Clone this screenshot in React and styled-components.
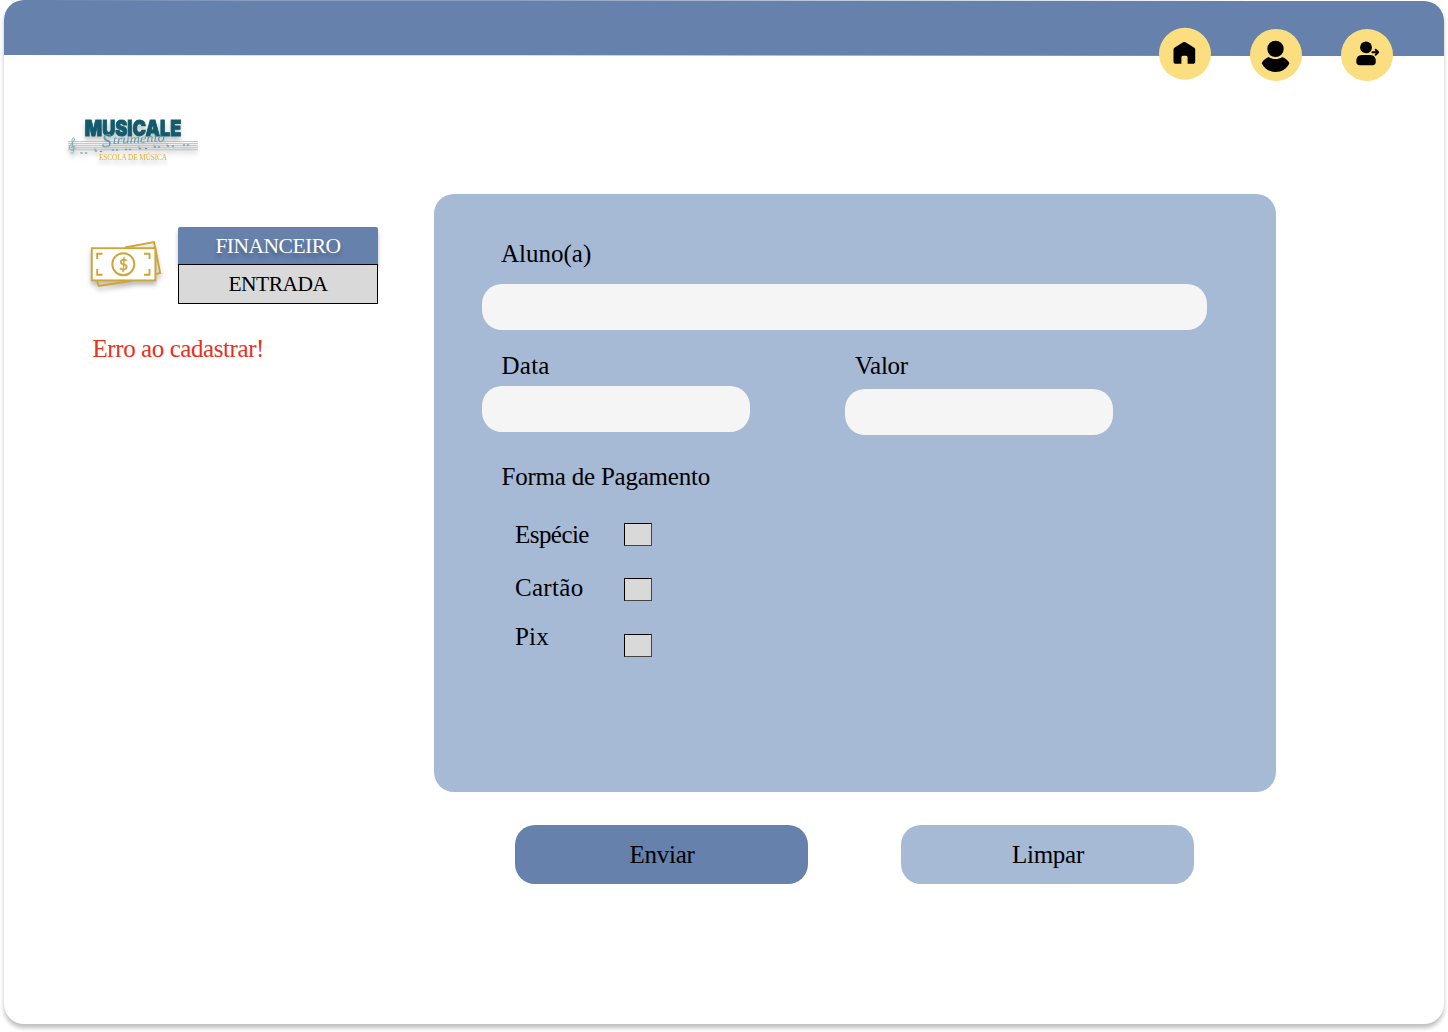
import React from "react";
import styled, { createGlobalStyle } from "styled-components";

const serif = '"Liberation Serif", "Times New Roman", serif';

const GlobalStyle = createGlobalStyle`
  * { box-sizing: border-box; }
  body { margin: 0; background: #fff; font-family: ${serif}; color: #000; }
`;

const Page = styled.div`
  width: 1448px;
  height: 1032px;
  padding: 0 4px 8px;
  overflow: hidden;
`;

const Card = styled.div`
  height: 1024px;
  background: #fff;
  border-radius: 20px;
  box-shadow: 0 4px 4px rgba(0, 0, 0, 0.25);
`;

const Header = styled.header`
  height: 55px;
  background: #6581ac;
  border-radius: 20px 20px 0 0;
  transform: skewY(0.04deg);
  transform-origin: left top;
`;

const Nav = styled.nav`
  display: flex;
  justify-content: flex-end;
  gap: 39px;
  padding: 27px 51px 0 0;
`;

const NavItem = styled.div`
  padding-top: ${(p) => p.$drop || 0}px;
`;

const NavButton = styled.button`
  display: flex;
  align-items: center;
  justify-content: center;
  width: 52px;
  height: 52px;
  padding: 0;
  border: 0;
  border-radius: 50%;
  background: #fbde80;
`;

const Brand = styled.svg`
  display: block;
  margin: 55px 0 20px 56px;
  overflow: visible;
`;

const BrandArt = styled.g`
  filter: drop-shadow(0 4px 2px rgba(0, 0, 0, 0.25));
`;

const Body = styled.div`
  display: flex;
`;

const Sidebar = styled.aside`
  width: 430px;
  padding: 26px 0 0 76px;
`;

const SectionHead = styled.div`
  display: flex;
  height: 114px;
  gap: 14px;
`;

const Bills = styled.svg`
  flex: none;
  width: 84px;
  height: 80px;
  overflow: visible;
  filter: drop-shadow(0 4px 2px rgba(0, 0, 0, 0.25));
`;

const Menu = styled.div`
  width: 200px;
  padding-top: 7px;
`;

const MenuTitle = styled.div`
  height: 37px;
  line-height: 39px;
  text-align: center;
  font-size: 21.5px;
  letter-spacing: -0.5px;
  color: #fff;
  background: #6581ac;
  border-radius: 2px 2px 0 0;
  box-shadow: 0 4px 4px rgba(0, 0, 0, 0.25);
  text-shadow: 0 4px 4px rgba(0, 0, 0, 0.25);
`;

const MenuItem = styled.div`
  position: relative;
  height: 40px;
  line-height: 38px;
  text-align: center;
  font-size: 21.5px;
  letter-spacing: -0.5px;
  background: #d9d9d9;
  border: 1px solid #000;
`;

const Text = styled.span`
  display: block;
  font-size: 25px;
  line-height: 30px;
  white-space: nowrap;
  letter-spacing: ${(p) => p.$spacing || 0}px;
  color: ${(p) => p.$color || "#000"};
`;

const ErrorText = styled(Text)`
  margin-left: 12.5px;
`;

const Form = styled.form`
  width: 842px;
`;

const Panel = styled.section`
  height: 598px;
  padding: 45px 48px 0;
  border-radius: 20px;
  background: #a6b9d5;
`;

const Field = styled.label`
  display: block;
  width: ${(p) => p.$width}px;
`;

const FieldName = styled(Text)`
  padding-left: ${(p) => p.$inset}px;
  margin-bottom: ${(p) => p.$gap}px;
`;

const Input = styled.input`
  display: block;
  width: 100%;
  height: 46px;
  padding: 0 20px;
  border: 0;
  border-radius: 20px;
  background: #f5f5f5;
  font: 22px ${serif};
`;

const FieldRow = styled.div`
  display: flex;
  gap: 95px;
  height: 132px;
  padding-top: 21px;
`;

const PaymentTitle = styled(Text)`
  margin: 0 0 28px 19.5px;
`;

const Option = styled.label`
  display: flex;
  height: ${(p) => p.$height}px;
  padding-left: 33px;
`;

const OptionName = styled(Text)`
  width: 109px;
`;

const Check = styled.input`
  appearance: none;
  width: 28px;
  height: 23px;
  margin: ${(p) => p.$drop}px 0 0;
  background: #d9d9d9;
  border: 1px solid #000;
  border-right-color: #444;
  border-bottom-color: #444;
`;

const Actions = styled.div`
  display: flex;
  gap: 93px;
  padding: 33px 0 0 81px;
`;

const Action = styled.button`
  width: 293px;
  height: 59px;
  padding: 0 0 0 1px;
  border: 0;
  border-radius: 20px;
  background: ${(p) => (p.$primary ? "#6581ac" : "#a6b9d5")};
  color: #000;
  font: 25px ${serif};
  letter-spacing: -0.25px;
`;

function Logo() {
  const notes = [[21.5, 43], [26, 43], [36, 41], [41, 41.5], [53, 40], [57, 40], [66, 39.5], [70, 39.5], [80, 38.5], [86, 38.5], [95, 37], [99, 37], [108, 36], [113, 36], [124, 35], [128, 35]];
  return (
    <Brand width="150" height="64" viewBox="0 0 150 64">
      <BrandArt>
        <text x="24.8" y="26" fill="#125b6c" stroke="#125b6c" strokeWidth=".9" fontFamily="Inter, sans-serif" fontWeight="900" fontSize="21.5" textLength="96.5" lengthAdjust="spacingAndGlyphs">MUSICALE</text>
        <g stroke="#a2a9ac" strokeWidth=".65">
          {[31.5, 33.6, 35.7, 37.8, 39.8].map((y) => <path key={y} d={`M8 ${y}H138`} />)}
        </g>
        <path d="M10.5 42.5C12 44.5 14 43 13.5 40.5L12 31C12 27 14.8 27 14.3 30C13.5 33 9.5 34.5 9.5 37.5C9.5 41 15 41 15 38C15 35.5 11.5 35.5 11.5 38" fill="none" stroke="#7aaebb" strokeWidth=".9" />
        <g fill="#7196a5">
          {notes.map(([x, y]) => <ellipse key={x} cx={x} cy={y} rx="1.3" ry=".8" />)}
        </g>
        <path d="M35 38v3M79 36v2.5M94 34.5v2.5M107 33v3" stroke="#7196a5" strokeWidth=".6" />
        <g fill="#6299aa" fontFamily={serif} fontStyle="italic" transform="rotate(-3 74 33)">
          <text x="42" y="35.5" fontSize="19">S</text>
          <text x="53" y="33" fontSize="12.5" textLength="52" lengthAdjust="spacingAndGlyphs">trumento</text>
        </g>
        <text x="39" y="50" fill="#dcae31" fontFamily={serif} fontSize="7.4" textLength="68" lengthAdjust="spacingAndGlyphs">ESCOLA DE MÚSICA</text>
      </BrandArt>
    </Brand>
  );
}

function MoneyIcon() {
  return (
    <Bills viewBox="0 0 84 80" fill="none" stroke="#cfa536" strokeWidth="1.9">
      <path d="M45 27.5L74 22L80.2 53L76 54M17 61.5L18.8 66L52 60.8" />
      <rect x="11.8" y="28.2" width="63.6" height="32.2" fill="#fff" />
      <circle cx="43.3" cy="44.2" r="11" />
      <path d="M22.5 33.7H17.2V39M64 33.7H69.5V39M22.5 54.7H17.2V49M64 54.7H69.5V49" />
      <text x="43.4" y="49.7" textAnchor="middle" fill="#cfa536" stroke="#cfa536" strokeWidth=".5" fontFamily="Lato, sans-serif" fontSize="15.5">$</text>
    </Bills>
  );
}

const HomeIcon = () => (
  <svg width="52" height="52" viewBox="0 0 52 52">
    <path d="M14.5 21.6Q14.5 20.5 15.4 19.9L24.1 14.5Q25.3 13.8 26.5 14.5L35.3 19.9Q36.2 20.5 36.2 21.6V34.2Q36.2 36 34.4 36H28.6V29.5Q28.6 28 27.1 28H23.9Q22.4 28 22.4 29.5V36H16.3Q14.5 36 14.5 34.2Z" />
  </svg>
);

const UserIcon = () => (
  <svg width="52" height="52" viewBox="0 0 52 52">
    <circle cx="25.5" cy="20" r="8.2" />
    <path d="M11.7 34.3C13.2 31 15.7 29.3 18.8 28C22.5 30.7 28.5 30.7 32.2 28C35.3 29.3 37.9 31 39.4 34.3C36.8 40 31.5 43 25.5 43C19.5 43 14.2 40 11.7 34.3Z" />
  </svg>
);

const LogoutIcon = () => (
  <svg width="52" height="52" viewBox="0 0 52 52">
    <circle cx="25" cy="18.5" r="5.9" />
    <path d="M15.3 32.5Q15.3 26 21 26H29.5Q34.8 26 34.8 32.5Q34.8 36.3 31.5 36.3H18.7Q15.3 36.3 15.3 32.5Z" />
    <path d="M31.4 23.3H37M34.6 20.7L37.2 23.3L34.6 25.9" fill="none" stroke="#000" strokeWidth="1.9" strokeLinecap="round" strokeLinejoin="round" />
  </svg>
);

export default function App() {
  return (
    <Page>
      <GlobalStyle />
      <Card>
        <Header>
          <Nav>
            <NavItem><NavButton aria-label="Início"><HomeIcon /></NavButton></NavItem>
            <NavItem $drop={1}><NavButton aria-label="Perfil"><UserIcon /></NavButton></NavItem>
            <NavItem $drop={1}><NavButton aria-label="Sair"><LogoutIcon /></NavButton></NavItem>
          </Nav>
        </Header>
        <Logo />
        <Body>
          <Sidebar>
            <SectionHead>
              <MoneyIcon />
              <Menu>
                <MenuTitle>FINANCEIRO</MenuTitle>
                <MenuItem>ENTRADA</MenuItem>
              </Menu>
            </SectionHead>
            <ErrorText $spacing={-0.42} $color="#e8301f">Erro ao cadastrar!</ErrorText>
          </Sidebar>
          <Form onSubmit={(e) => e.preventDefault()}>
            <Panel>
              <Field $width={725}>
                <FieldName $inset={19} $gap={15}>Aluno(a)</FieldName>
                <Input />
              </Field>
              <FieldRow>
                <Field $width={268}>
                  <FieldName $inset={19.5} $gap={5} $spacing={0.25}>Data</FieldName>
                  <Input />
                </Field>
                <Field $width={268}>
                  <FieldName $inset={10} $gap={8} $spacing={-0.25}>Valor</FieldName>
                  <Input />
                </Field>
              </FieldRow>
              <PaymentTitle $spacing={-0.22}>Forma de Pagamento</PaymentTitle>
              <Option $height={53}>
                <OptionName $spacing={-0.55}>Espécie</OptionName>
                <Check type="checkbox" $drop={3} />
              </Option>
              <Option $height={49}>
                <OptionName $spacing={0.3}>Cartão</OptionName>
                <Check type="checkbox" $drop={5} />
              </Option>
              <Option $height={49}>
                <OptionName $spacing={0.2}>Pix</OptionName>
                <Check type="checkbox" $drop={12} />
              </Option>
            </Panel>
            <Actions>
              <Action $primary>Enviar</Action>
              <Action>Limpar</Action>
            </Actions>
          </Form>
        </Body>
      </Card>
    </Page>
  );
}
